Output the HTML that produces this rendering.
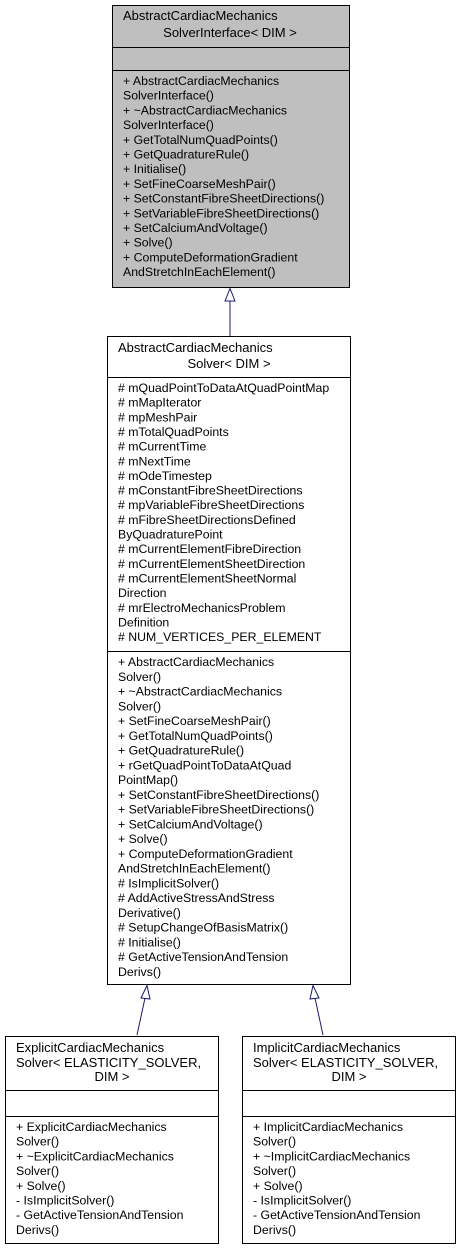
<!DOCTYPE html>
<html><head><meta charset="utf-8"><style>
html,body{margin:0;padding:0;background:#fff;}
svg{display:block;}
text{font-family:"Liberation Sans",Arial,sans-serif;font-size:12.3px;fill:#000;}
.t{font-size:13px;}
</style></head><body>
<svg width="461" height="1251" viewBox="0 0 461 1251" xmlns="http://www.w3.org/2000/svg">
<rect x="112.5" y="5.5" width="237" height="282" fill="#bfbfbf" stroke="#000" stroke-width="1"/>
<line x1="112" y1="47.5" x2="350" y2="47.5" stroke="#000"/>
<line x1="112" y1="70.5" x2="350" y2="70.5" stroke="#000"/>
<text class="t" x="123" y="20">AbstractCardiacMechanics</text>
<text class="t" x="230" y="37" text-anchor="middle">SolverInterface&lt; DIM &gt;</text>
<text x="123" y="85">+ AbstractCardiacMechanics</text>
<text x="123" y="99.7">SolverInterface()</text>
<text x="123" y="114.4">+ ~AbstractCardiacMechanics</text>
<text x="123" y="129.1">SolverInterface()</text>
<text x="123" y="143.8">+ GetTotalNumQuadPoints()</text>
<text x="123" y="158.5">+ GetQuadratureRule()</text>
<text x="123" y="173.2">+ Initialise()</text>
<text x="123" y="187.9">+ SetFineCoarseMeshPair()</text>
<text x="123" y="202.6">+ SetConstantFibreSheetDirections()</text>
<text x="123" y="217.3">+ SetVariableFibreSheetDirections()</text>
<text x="123" y="232">+ SetCalciumAndVoltage()</text>
<text x="123" y="246.7">+ Solve()</text>
<text x="123" y="261.4">+ ComputeDeformationGradient</text>
<text x="123" y="276.1">AndStretchInEachElement()</text>
<line x1="230" y1="301" x2="230" y2="336" stroke="#191970"/>
<polygon points="230,288.5 225,301 235,301" fill="#fff" stroke="#191970"/>
<rect x="107.5" y="336.5" width="243" height="648" fill="#fff" stroke="#000"/>
<line x1="107" y1="377.5" x2="351" y2="377.5" stroke="#000"/>
<line x1="107" y1="651.5" x2="351" y2="651.5" stroke="#000"/>
<text class="t" x="118" y="352">AbstractCardiacMechanics</text>
<text class="t" x="229" y="368" text-anchor="middle">Solver&lt; DIM &gt;</text>
<text x="118" y="392"># mQuadPointToDataAtQuadPointMap</text>
<text x="118" y="406.65"># mMapIterator</text>
<text x="118" y="421.3"># mpMeshPair</text>
<text x="118" y="435.95"># mTotalQuadPoints</text>
<text x="118" y="450.6"># mCurrentTime</text>
<text x="118" y="465.25"># mNextTime</text>
<text x="118" y="479.9"># mOdeTimestep</text>
<text x="118" y="494.55"># mConstantFibreSheetDirections</text>
<text x="118" y="509.2"># mpVariableFibreSheetDirections</text>
<text x="118" y="523.85"># mFibreSheetDirectionsDefined</text>
<text x="118" y="538.5">ByQuadraturePoint</text>
<text x="118" y="553.15"># mCurrentElementFibreDirection</text>
<text x="118" y="567.8"># mCurrentElementSheetDirection</text>
<text x="118" y="582.45"># mCurrentElementSheetNormal</text>
<text x="118" y="597.1">Direction</text>
<text x="118" y="611.75"># mrElectroMechanicsProblem</text>
<text x="118" y="626.4">Definition</text>
<text x="118" y="641.05"># NUM_VERTICES_PER_ELEMENT</text>
<text x="118" y="666">+ AbstractCardiacMechanics</text>
<text x="118" y="680.76">Solver()</text>
<text x="118" y="695.52">+ ~AbstractCardiacMechanics</text>
<text x="118" y="710.28">Solver()</text>
<text x="118" y="725.04">+ SetFineCoarseMeshPair()</text>
<text x="118" y="739.8">+ GetTotalNumQuadPoints()</text>
<text x="118" y="754.56">+ GetQuadratureRule()</text>
<text x="118" y="769.32">+ rGetQuadPointToDataAtQuad</text>
<text x="118" y="784.08">PointMap()</text>
<text x="118" y="798.84">+ SetConstantFibreSheetDirections()</text>
<text x="118" y="813.6">+ SetVariableFibreSheetDirections()</text>
<text x="118" y="828.36">+ SetCalciumAndVoltage()</text>
<text x="118" y="843.12">+ Solve()</text>
<text x="118" y="857.88">+ ComputeDeformationGradient</text>
<text x="118" y="872.64">AndStretchInEachElement()</text>
<text x="118" y="887.4"># IsImplicitSolver()</text>
<text x="118" y="902.16"># AddActiveStressAndStress</text>
<text x="118" y="916.92">Derivative()</text>
<text x="118" y="931.68"># SetupChangeOfBasisMatrix()</text>
<text x="118" y="946.44"># Initialise()</text>
<text x="118" y="961.2"># GetActiveTensionAndTension</text>
<text x="118" y="975.96">Derivs()</text>
<line x1="145" y1="998" x2="137" y2="1035" stroke="#191970"/>
<polygon points="147,985.5 141,998 150,999" fill="#fff" stroke="#191970"/>
<line x1="315" y1="998" x2="323" y2="1035" stroke="#191970"/>
<polygon points="313,985.5 310,999 319,998" fill="#fff" stroke="#191970"/>
<rect x="5.5" y="1036.5" width="213" height="207" fill="#fff" stroke="#000"/>
<line x1="5" y1="1090.5" x2="219" y2="1090.5" stroke="#000"/>
<line x1="5" y1="1116.5" x2="219" y2="1116.5" stroke="#000"/>
<text class="t" x="16" y="1052">ExplicitCardiacMechanics</text>
<text class="t" x="16" y="1067">Solver&lt; ELASTICITY_SOLVER,</text>
<text class="t" x="112" y="1081" text-anchor="middle">DIM &gt;</text>
<text x="16" y="1131">+ ExplicitCardiacMechanics</text>
<text x="16" y="1145.7">Solver()</text>
<text x="16" y="1160.4">+ ~ExplicitCardiacMechanics</text>
<text x="16" y="1175.1">Solver()</text>
<text x="16" y="1189.8">+ Solve()</text>
<text x="16" y="1204.5">- IsImplicitSolver()</text>
<text x="16" y="1219.2">- GetActiveTensionAndTension</text>
<text x="16" y="1233.9">Derivs()</text>
<rect x="242.5" y="1036.5" width="213" height="207" fill="#fff" stroke="#000"/>
<line x1="242" y1="1090.5" x2="456" y2="1090.5" stroke="#000"/>
<line x1="242" y1="1116.5" x2="456" y2="1116.5" stroke="#000"/>
<text class="t" x="253" y="1052">ImplicitCardiacMechanics</text>
<text class="t" x="253" y="1067">Solver&lt; ELASTICITY_SOLVER,</text>
<text class="t" x="349" y="1081" text-anchor="middle">DIM &gt;</text>
<text x="253" y="1131">+ ImplicitCardiacMechanics</text>
<text x="253" y="1145.7">Solver()</text>
<text x="253" y="1160.4">+ ~ImplicitCardiacMechanics</text>
<text x="253" y="1175.1">Solver()</text>
<text x="253" y="1189.8">+ Solve()</text>
<text x="253" y="1204.5">- IsImplicitSolver()</text>
<text x="253" y="1219.2">- GetActiveTensionAndTension</text>
<text x="253" y="1233.9">Derivs()</text>
</svg>
</body></html>
